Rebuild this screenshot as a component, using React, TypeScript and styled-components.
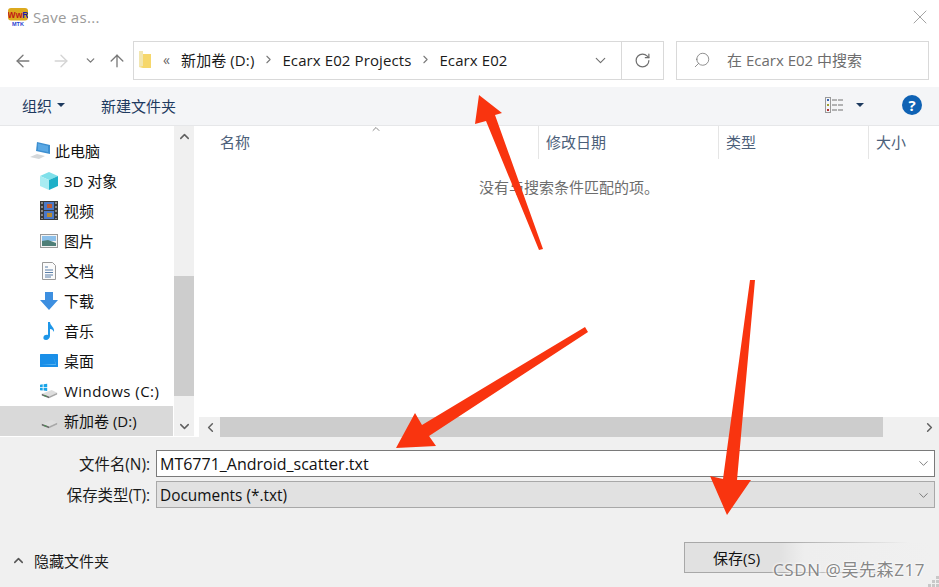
import React from 'react';
import styled, { createGlobalStyle } from 'styled-components';
import { ArrowLeft, ArrowRight, ArrowUp, ChevronDown, ChevronLeft, ChevronRight, ChevronUp, RotateCw, Search, X } from 'lucide-react';

const UI_FONT = `"Open Sans", "Noto Sans CJK SC", sans-serif`;

const GlobalStyle = createGlobalStyle`
    html, body {
        margin: 0;
        padding: 0;
        background: #ffffff;
        font-family: ${UI_FONT};
        overflow: hidden;
    }
`;

const Dialog = styled.div`
    position: relative;
    width: 939px;
    height: 587px;
    display: flex;
    flex-direction: column;
    overflow: hidden;
    background: #ffffff;
`;

const TitleBar = styled.div`
    height: 41px;
    display: flex;
    align-items: center;
    padding: 0 7px 7px 8px;
    box-sizing: border-box;
`;

const TitleText = styled.span`
    margin-left: 5px;
    font-size: 15px;
    letter-spacing: 0.3px;
    color: #9a9a9a;
    flex: 1;
`;

const CloseIcon = styled(X)`
    color: #8c8c8c;
`;

const AddressRow = styled.div`
    height: 46px;
    display: flex;
    align-items: flex-start;
    padding-right: 10px;
`;

const NavButtons = styled.div`
    width: 133px;
    height: 39px;
    display: flex;
    align-items: center;
    flex-shrink: 0;
    padding-left: 13px;
    box-sizing: border-box;
`;

const NavSlot = styled.div<{ $w: number }>`
    width: ${p => p.$w}px;
    display: flex;
    align-items: center;
    color: #7a7a7a;
`;

const AddressBox = styled.div`
    width: 531px;
    height: 39px;
    border: 1px solid #d9d9d9;
    box-sizing: border-box;
    display: flex;
    align-items: center;
    font-size: 15px;
    letter-spacing: 0.1px;
    color: #1a1a1a;
    flex-shrink: 0;
`;

const Crumbs = styled.div`
    flex: 1;
    display: flex;
    align-items: center;
    padding-left: 5px;
    padding-bottom: 2px;
`;

const Crumb = styled.span`
    white-space: nowrap;
`;

const CrumbSep = styled.span`
    display: flex;
    align-items: center;
    justify-content: center;
    width: 28px;
    color: #7a7a7a;
`;

const LeadingQuote = styled.span`
    margin: 0 11px 0 12px;
    color: #666666;
    font-size: 14px;
`;

const AddressAction = styled.div<{ $divider?: boolean }>`
    width: ${p => (p.$divider ? 42 : 41)}px;
    height: 100%;
    display: flex;
    align-items: center;
    justify-content: center;
    color: #6f6f6f;
    border-left: ${p => (p.$divider ? '1px solid #d9d9d9' : 'none')};
    box-sizing: border-box;
`;

const SearchBox = styled.div`
    margin-left: 12px;
    flex: 1;
    height: 39px;
    border: 1px solid #d9d9d9;
    box-sizing: border-box;
    display: flex;
    align-items: center;
    padding: 0 0 2px 16px;
    gap: 16px;
    font-size: 15px;
    color: #6d6d6d;
`;

const SearchGlyph = styled(Search)`
    transform: scaleX(-1);
`;

const Toolbar = styled.div`
    height: 39px;
    background: #f4f5f7;
    border-bottom: 1px solid #e6e7e9;
    box-sizing: border-box;
    display: flex;
    align-items: center;
    padding: 0 17px 2px 22px;
    font-size: 15px;
    color: #1e3a5f;
`;

const ToolbarCaret = styled.span<{ $gap: number }>`
    width: 0;
    height: 0;
    margin-left: ${p => p.$gap}px;
    border-left: 4px solid transparent;
    border-right: 4px solid transparent;
    border-top: 4px solid #1e3a5f;
`;

const NewFolder = styled.span`
    margin-left: 36px;
    flex: 1;
`;

const HelpBadge = styled.span`
    margin-left: 38px;
    width: 20px;
    height: 20px;
    border-radius: 50%;
    background: #0f62b4;
    color: #ffffff;
    font-size: 15px;
    font-weight: 700;
    display: flex;
    align-items: center;
    justify-content: center;
`;

const Body = styled.div`
    height: 311px;
    display: flex;
    background: #ffffff;
`;

const NavPane = styled.div`
    width: 173px;
    display: flex;
    flex-direction: column;
    padding-top: 10px;
    box-sizing: border-box;
`;

const NavItem = styled.div<{ $selected?: boolean; $root?: boolean; $latin?: boolean }>`
    height: 30px;
    display: flex;
    align-items: center;
    gap: ${p => (p.$root ? 5 : 6)}px;
    padding-left: ${p => (p.$root ? 30 : 40)}px;
    padding-bottom: 1px;
    box-sizing: border-box;
    font-size: 15px;
    letter-spacing: ${p => (p.$latin ? '0.45px' : '0')};
    color: #111111;
    background: ${p => (p.$selected ? '#d9d9d9' : 'transparent')};
`;

const NavIconSlot = styled.span<{ $root?: boolean }>`
    width: ${p => (p.$root ? 20 : 18)}px;
    display: flex;
    justify-content: center;
    flex-shrink: 0;
`;

const VScroll = styled.div`
    width: 20px;
    background: #f0f0f0;
    display: flex;
    flex-direction: column;
    color: #606060;
    margin: 0 5px 1px 1px;
`;

const ScrollEnd = styled.div`
    height: 20px;
    display: flex;
    align-items: center;
    justify-content: center;
    flex-shrink: 0;
`;

const VTrack = styled.div<{ $h: number; $thumb?: boolean }>`
    height: ${p => p.$h}px;
    background: ${p => (p.$thumb ? '#cdcdcd' : 'transparent')};
`;

const ListPane = styled.div`
    flex: 1;
    display: flex;
    flex-direction: column;
    min-width: 0;
    position: relative;
`;

const ColumnHeader = styled.div`
    height: 33px;
    display: flex;
    font-size: 15px;
    color: #4c607a;
`;

const Column = styled.div<{ $w: number; $divider?: boolean }>`
    width: ${p => p.$w}px;
    flex-shrink: 0;
    box-sizing: border-box;
    padding: 0 0 2px ${p => (p.$divider ? 7 : 21)}px;
    display: flex;
    align-items: center;
    border-right: 1px solid #e5e5e5;
    &:last-child {
        border-right: none;
    }
`;

const SortMark = styled(ChevronUp)`
    position: absolute;
    left: 171px;
    top: -3px;
    color: #8a8a8a;
`;

const ListContent = styled.div`
    flex: 1;
    padding-top: 17px;
    text-align: center;
    font-size: 15px;
    color: #6d6d6d;
`;

const HScroll = styled.div`
    height: 20px;
    display: flex;
    background: #f0f0f0;
    color: #606060;
`;

const HEnd = styled.div`
    width: 20px;
    display: flex;
    align-items: center;
    justify-content: center;
    flex-shrink: 0;
    margin-left: 1px;
`;

const HThumb = styled.div`
    width: 663px;
    background: #cdcdcd;
`;

const HRest = styled.div`
    flex: 1;
`;

const Footer = styled.div`
    flex: 1;
    background: #f0f0f0;
    display: flex;
    flex-direction: column;
    padding-top: 13px;
    box-sizing: border-box;
    position: relative;
`;

const FieldRow = styled.div`
    height: 27px;
    margin-bottom: 4px;
    display: flex;
    align-items: center;
    padding-right: 4px;
`;

const FieldLabel = styled.label`
    width: 150px;
    text-align: right;
    font-size: 15.4px;
    color: #1a1a1a;
    flex-shrink: 0;
`;

const FieldBox = styled.div<{ $filled?: boolean }>`
    margin-left: 6px;
    flex: 1;
    height: 27px;
    box-sizing: border-box;
    border: 1px solid ${p => (p.$filled ? '#a8a8a8' : '#7a7a7a')};
    background: ${p => (p.$filled ? '#e1e1e1' : '#ffffff')};
    display: flex;
    align-items: center;
    justify-content: space-between;
    padding: ${p => (p.$filled ? 1 : 0)}px 3px 0 3px;
    font-size: ${p => (p.$filled ? 15.4 : 16)}px;
    color: #111111;
`;

const FieldChevron = styled(ChevronDown)`
    color: #555555;
`;

const FooterBar = styled.div`
    flex: 1;
    display: flex;
    align-items: flex-start;
    justify-content: space-between;
    padding: 30px 0 0 11px;
`;

const HideFolders = styled.div`
    display: flex;
    align-items: center;
    gap: 8px;
    font-size: 15px;
    color: #1a1a1a;
    padding-top: 8px;
`;

const SaveButton = styled.div`
    width: 250px;
    height: 31px;
    margin-right: 5px;
    box-sizing: border-box;
    border: 1px solid;
    border-image: linear-gradient(90deg, #a8a8a8 40%, #f0f0f0 90%) 1;
    background: linear-gradient(90deg, #e1e1e1 38%, #eeeeee 48%, #f0f0f0);
    font-size: 15px;
    color: #111111;
    display: flex;
    align-items: center;
    padding-left: 28px;
`;

const ResizeGrip = styled.svg`
    position: absolute;
    right: 0;
    bottom: 0;
`;

const Overlay = styled.svg`
    position: absolute;
    inset: 0;
    pointer-events: none;
`;

const Watermark = styled.div`
    position: absolute;
    left: 773px;
    top: 556px;
    font-size: 17px;
    letter-spacing: 0.6px;
    color: rgba(120, 120, 120, 0.9);
    text-shadow: 0 0 3px #ffffff, 0 0 3px #ffffff;
    white-space: nowrap;
`;

const AppIcon = () => (
    <svg width="20" height="18" viewBox="0 0 20 18">
        <rect x="0" y="0" width="20" height="12.500" rx="3" fill="#dca91e" />
        <text x="10" y="9.500" textAnchor="middle" fontFamily="Liberation Sans, sans-serif" fontSize="8.500" fontWeight="700" fill="#c01818">
            Ww<tspan fill="#1c1ca8">R</tspan>
        </text>
        <text x="10" y="17.500" textAnchor="middle" fontFamily="Liberation Sans, sans-serif" fontSize="5.500" fontWeight="700" fill="#2b3fd0">
            MTK
        </text>
    </svg>
);

const ViewIcon = () => (
    <svg width="18" height="16" viewBox="0 0 18 16">
        <rect x="0.5" y="0.5" width="5" height="15" fill="#f4f5f7" stroke="#9a9a9a" />
        <rect x="2" y="2" width="2" height="2" fill="#3a66b0" />
        <rect x="2" y="7" width="2" height="2" fill="#a0a030" />
        <rect x="2" y="12" width="2" height="2" fill="#b03030" />
        <path d="M7 3h5M13 3h5M7 8h5M13 8h5M7 13h5M13 13h5" stroke="#707070" />
    </svg>
);

const FolderIcon = () => (
    <svg width="12" height="17" viewBox="0 0 12 17">
        <path d="M0 0h4v3h8v14H4l-4-1z" fill="#f6d76b" />
        <path d="M0 0h4v15l-4 1z" fill="#f2e6b0" />
    </svg>
);

const PcIcon = () => (
    <svg width="20" height="18" viewBox="0 0 20 18">
        <path d="M7 0l13 3v9L6 9z" fill="#3d8fd0" />
        <path d="M8 1.500l10 2.500v6L8 8z" fill="#5aa8e4" />
        <path d="M0 15l7-3 8 2-6 3z" fill="#d5d8da" />
    </svg>
);

const CubeIcon = () => (
    <svg width="18" height="18" viewBox="0 0 18 18">
        <path d="M9 0l9 4-9 4-9-4z" fill="#7fe0ea" />
        <path d="M0 4l9 4v10l-9-4z" fill="#a8ecf2" />
        <path d="M18 4L9 8v10l9-4z" fill="#1fb0c8" />
    </svg>
);

const FilmIcon = () => (
    <svg width="18" height="19" viewBox="0 0 18 19">
        <rect width="18" height="19" fill="#3a3a3a" />
        <rect x="4" y="1" width="10" height="8" fill="#4a78c8" />
        <rect x="4" y="10" width="10" height="8" fill="#4a78c8" />
        <rect x="7" y="3" width="5" height="4" fill="#c05a30" />
        <rect x="7" y="12" width="5" height="4" fill="#b88a30" />
        <path d="M2 1v17M16 1v17" stroke="#dddddd" strokeDasharray="2 2" />
    </svg>
);

const PictureIcon = () => (
    <svg width="18" height="14" viewBox="0 0 18 14">
        <rect x="0.5" y="0.5" width="17" height="13" fill="#f4f4f4" stroke="#9a9a9a" />
        <rect x="2" y="2" width="14" height="5" fill="#8cc0ea" />
        <path d="M2 7l6-1 8 3v3H2z" fill="#4f7f78" />
    </svg>
);

const DocIcon = () => (
    <svg width="16" height="18" viewBox="0 0 16 18">
        <path d="M1.500.5h10l3 3v14h-13z" fill="#fbfbfb" stroke="#9a9a9a" />
        <path d="M4 5h3M4 8h8M4 10.500h8M4 13h8M4 15h6" stroke="#5b7fa8" />
    </svg>
);

const DownloadIcon = () => (
    <svg width="18" height="18" viewBox="0 0 18 18">
        <path d="M5 0h8v8h5l-9 10L0 8h5z" fill="#3d8fe0" />
    </svg>
);

const MusicIcon = () => (
    <svg width="18" height="18" viewBox="0 0 18 18">
        <path d="M8 0h2c0 4 5 5 4 10-1-2-2-3-4-3v7c0 2-2 4-4 4s-3-1-2.500-3 2.500-2.500 4.500-2z" fill="#1e96e8" />
    </svg>
);

const DesktopIcon = () => (
    <svg width="18" height="13" viewBox="0 0 18 13">
        <rect width="18" height="13" rx="0.5" fill="#1a8fe8" />
        <path d="M1 11l15-1-3-8 3 9z" fill="#6cc0f4" />
    </svg>
);

const DriveIcon = ({ win }: { win?: boolean }) => (
    <svg width="20" height="16" viewBox="0 0 20 16">
        {win && <path d="M0 1l3-.5v3H0zM4 .400l4-.4v3.500H4zM0 4.500h3v3l-3-.4zM4 4.500h4V8l-4-.5z" fill="#19a4e8" />}
        <path d="M2 11l11-4 6 3-9 4z" fill="#dedede" />
        <path d="M2 11l8 3v2l-8-3z" fill="#6a6a6a" />
        <path d="M10 14l9-4v2l-9 4z" fill="#a8a8a8" />
        <rect x="5" y="13" width="2" height="1" fill="#30b040" />
    </svg>
);

const navItems = [
    { label: '此电脑', icon: <PcIcon />, root: true },
    { label: '3D 对象', icon: <CubeIcon /> },
    { label: '视频', icon: <FilmIcon /> },
    { label: '图片', icon: <PictureIcon /> },
    { label: '文档', icon: <DocIcon /> },
    { label: '下载', icon: <DownloadIcon /> },
    { label: '音乐', icon: <MusicIcon /> },
    { label: '桌面', icon: <DesktopIcon /> },
    { label: 'Windows (C:)', icon: <DriveIcon win />, latin: true },
    { label: '新加卷 (D:)', icon: <DriveIcon />, selected: true },
];

export default function App() {
    return (
        <Dialog>
            <GlobalStyle />
            <TitleBar>
                <AppIcon />
                <TitleText>Save as...</TitleText>
                <CloseIcon size={24} strokeWidth={0.8} />
            </TitleBar>

            <AddressRow>
                <NavButtons>
                    <NavSlot $w={38}><ArrowLeft size={20} strokeWidth={1.6} /></NavSlot>
                    <NavSlot $w={33}><ArrowRight size={20} strokeWidth={1.6} color="#d4d4d4" /></NavSlot>
                    <NavSlot $w={23}><ChevronDown size={13} strokeWidth={2.4} /></NavSlot>
                    <NavSlot $w={20}><ArrowUp size={20} strokeWidth={1.6} /></NavSlot>
                </NavButtons>
                <AddressBox>
                    <Crumbs>
                        <FolderIcon />
                        <LeadingQuote>«</LeadingQuote>
                        <Crumb>新加卷 (D:)</Crumb>
                        <CrumbSep><ChevronRight size={13} /></CrumbSep>
                        <Crumb>Ecarx E02 Projects</Crumb>
                        <CrumbSep><ChevronRight size={13} /></CrumbSep>
                        <Crumb>Ecarx E02</Crumb>
                    </Crumbs>
                    <AddressAction><ChevronDown size={17} strokeWidth={1.6} /></AddressAction>
                    <AddressAction $divider><RotateCw size={17} strokeWidth={1.7} /></AddressAction>
                </AddressBox>
                <SearchBox>
                    <SearchGlyph size={18} strokeWidth={1} />
                    在 Ecarx E02 中搜索
                </SearchBox>
            </AddressRow>

            <Toolbar>
                组织
                <ToolbarCaret $gap={5} />
                <NewFolder>新建文件夹</NewFolder>
                <ViewIcon />
                <ToolbarCaret $gap={13} />
                <HelpBadge>?</HelpBadge>
            </Toolbar>

            <Body>
                <NavPane>
                    {navItems.map(item => (
                        <NavItem key={item.label} $root={item.root} $latin={item.latin} $selected={item.selected}>
                            <NavIconSlot $root={item.root}>{item.icon}</NavIconSlot>
                            {item.label}
                        </NavItem>
                    ))}
                </NavPane>
                <VScroll>
                    <ScrollEnd><ChevronUp size={15} strokeWidth={2.4} /></ScrollEnd>
                    <VTrack $h={130} />
                    <VTrack $h={120} $thumb />
                    <VTrack $h={20} />
                    <ScrollEnd><ChevronDown size={15} strokeWidth={2.4} /></ScrollEnd>
                </VScroll>
                <ListPane>
                    <ColumnHeader>
                        <SortMark size={12} />
                        <Column $w={340}>名称</Column>
                        <Column $w={180} $divider>修改日期</Column>
                        <Column $w={150} $divider>类型</Column>
                        <Column $w={70} $divider>大小</Column>
                    </ColumnHeader>
                    <ListContent>没有与搜索条件匹配的项。</ListContent>
                    <HScroll>
                        <HEnd><ChevronLeft size={15} strokeWidth={2.4} /></HEnd>
                        <HThumb />
                        <HRest />
                        <HEnd><ChevronRight size={15} strokeWidth={2.4} /></HEnd>
                    </HScroll>
                </ListPane>
            </Body>

            <Footer>
                <FieldRow>
                    <FieldLabel>文件名(N):</FieldLabel>
                    <FieldBox>
                        MT6771_Android_scatter.txt
                        <FieldChevron size={15} strokeWidth={1.2} />
                    </FieldBox>
                </FieldRow>
                <FieldRow>
                    <FieldLabel>保存类型(T):</FieldLabel>
                    <FieldBox $filled>
                        Documents (*.txt)
                        <FieldChevron size={15} strokeWidth={1.2} />
                    </FieldBox>
                </FieldRow>
                <FooterBar>
                    <HideFolders>
                        <ChevronUp size={15} strokeWidth={2.4} color="#555555" />
                        隐藏文件夹
                    </HideFolders>
                    <SaveButton>保存(S)</SaveButton>
                </FooterBar>
                <ResizeGrip width="11" height="11" viewBox="0 0 11 11">
                    <path d="M8 0h3v3H8zM4 4h3v3H4zM8 4h3v3H8zM0 8h3v3H0zM4 8h3v3H4zM8 8h3v3H8z" fill="#c8c8c8" />
                </ResizeGrip>
            </Footer>

            <Overlay width="939" height="587" viewBox="0 0 939 587">
                <path d="M543 249L495 115L502 113L479 95L475 124L486 121L539 250Z" fill="#f9340f" />
                <path d="M588 332L429 436L436 446L396 448L415 413L422 425L585 327Z" fill="#f9340f" />
                <path d="M755 280L737 480L751 480L727 515L710 476L723 479L750 280Z" fill="#f9340f" />
            </Overlay>
            <Watermark>CSDN @吴先森Z17</Watermark>
        </Dialog>
    );
}
